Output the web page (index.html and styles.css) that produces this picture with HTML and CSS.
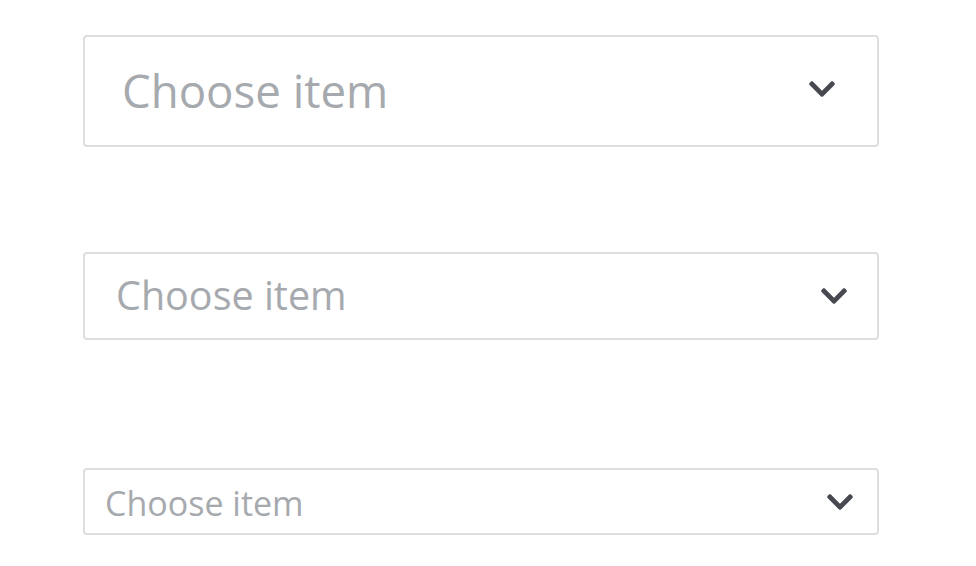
FILE: index.html
```html
<!DOCTYPE html>
<html lang="en">
<head>
<meta charset="utf-8">
<title>Selects</title>
<link rel="stylesheet" href="styles.css">
</head>
<body>
<main class="page">
  <div class="select select-lg">
    <span class="placeholder">Choose item</span>
    <svg class="chevron" viewBox="5 120 438 272" aria-hidden="true"><path d="M207.029 381.476L12.686 187.132c-9.373-9.373-9.373-24.569 0-33.941l22.667-22.667c9.357-9.357 24.522-9.375 33.901-.04L224 284.505l154.745-154.021c9.379-9.335 24.544-9.317 33.901.04l22.667 22.667c9.373 9.373 9.373 24.569 0 33.941L240.971 381.476c-9.373 9.372-24.569 9.372-33.942 0z"/></svg>
  </div>
  <div class="select select-md">
    <span class="placeholder">Choose item</span>
    <svg class="chevron" viewBox="5 120 438 272" aria-hidden="true"><path d="M207.029 381.476L12.686 187.132c-9.373-9.373-9.373-24.569 0-33.941l22.667-22.667c9.357-9.357 24.522-9.375 33.901-.04L224 284.505l154.745-154.021c9.379-9.335 24.544-9.317 33.901.04l22.667 22.667c9.373 9.373 9.373 24.569 0 33.941L240.971 381.476c-9.373 9.372-24.569 9.372-33.942 0z"/></svg>
  </div>
  <div class="select select-sm">
    <span class="placeholder">Choose item</span>
    <svg class="chevron" viewBox="5 120 438 272" aria-hidden="true"><path d="M207.029 381.476L12.686 187.132c-9.373-9.373-9.373-24.569 0-33.941l22.667-22.667c9.357-9.357 24.522-9.375 33.901-.04L224 284.505l154.745-154.021c9.379-9.335 24.544-9.317 33.901.04l22.667 22.667c9.373 9.373 9.373 24.569 0 33.941L240.971 381.476c-9.373 9.372-24.569 9.372-33.942 0z"/></svg>
  </div>
</main>
</body>
</html>
```

FILE: styles.css
```css
html, body {
  margin: 0;
  padding: 0;
  background: #ffffff;
}

body {
  font-family: "Open Sans", "Noto Sans", sans-serif;
}

.page {
  display: flex;
  flex-direction: column;
  padding: 35px 97px 0 83px;
}

.select {
  box-sizing: border-box;
  display: flex;
  align-items: center;
  justify-content: space-between;
  border: 2px solid #dcdee0;
  border-radius: 4px;
  background: #ffffff;
}

.placeholder {
  color: #a6aaae;
  line-height: 1;
  white-space: nowrap;
}

.chevron {
  width: 26px;
  height: 16px;
  fill: #464a50;
  flex: none;
}

.select-lg {
  height: 112px;
  padding: 0 42px 0 37px;
}
.select-lg .placeholder {
  font-size: 45.6px;
  margin-top: 0;
}
.select-lg .chevron {
  margin-top: -5px;
}

.select-md {
  height: 88px;
  margin-top: 105px;
  padding: 0 30px 0 31px;
}
.select-md .placeholder {
  font-size: 39.5px;
  margin-top: 0;
}

.select-sm {
  height: 67px;
  margin-top: 128px;
  padding: 0 24px 0 20px;
}
.select-sm .placeholder {
  font-size: 34px;
  margin-top: 2px;
}
```
